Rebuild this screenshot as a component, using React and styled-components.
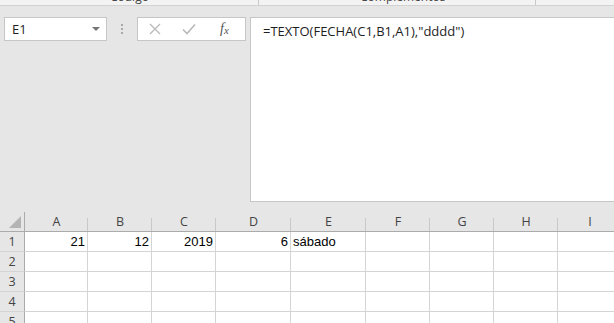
import styled, { createGlobalStyle } from "styled-components";

const GlobalStyle = createGlobalStyle`
  html, body {
    margin: 0;
    padding: 0;
    background: #e6e6e6;
    overflow: hidden;
  }
  body {
    width: 614px;
    height: 323px;
    font-family: "Liberation Sans", Arial, sans-serif;
  }
`;

const columns = [
  { name: "A", width: 63 },
  { name: "B", width: 64 },
  { name: "C", width: 64 },
  { name: "D", width: 75 },
  { name: "E", width: 75 },
  { name: "F", width: 64 },
  { name: "G", width: 64 },
  { name: "H", width: 64 },
  { name: "I", width: 64 },
];

const rows = [
  { n: 1, cells: { A: "21", B: "12", C: "2019", D: "6", E: "sábado" } },
  { n: 2, cells: {} },
  { n: 3, cells: {} },
  { n: 4, cells: {} },
  { n: 5, cells: {} },
];

const textCols = ["E"];

const App = () => {
  return (
    <>
      <GlobalStyle />
      <Page>
        <Ribbon>
          <RibbonGroup $width={258}>
            <GroupLabel $left={110}>Código</GroupLabel>
          </RibbonGroup>
          <RibbonGroup $width={276}>
            <GroupLabel $left={101}>Complementos</GroupLabel>
          </RibbonGroup>
          <RibbonGroup $width={80} $last />
        </Ribbon>

        <FormulaRow>
          <NameBox>
            <span>E1</span>
            <DropArrow />
          </NameBox>
          <Grip>
            <i />
            <i />
            <i />
          </Grip>
          <ActionBox>
            <ActionIcon>
              <svg width="12" height="12" viewBox="0 0 12 12">
                <path d="M1 1 L11 11 M11 1 L1 11" stroke="#b9b9b9" strokeWidth="1.3" fill="none" />
              </svg>
            </ActionIcon>
            <ActionIcon>
              <svg width="14" height="12" viewBox="0 0 14 12">
                <path d="M1 6.5 L5 10.5 L13 1.5" stroke="#b9b9b9" strokeWidth="1.6" fill="none" />
              </svg>
            </ActionIcon>
            <Fx>
              f<sub>x</sub>
            </Fx>
          </ActionBox>
          <FormulaInput>=TEXTO(FECHA(C1,B1,A1),"dddd")</FormulaInput>
        </FormulaRow>

        <Sheet $cols={columns.map((c) => c.width + "px").join(" ")}>
          <Corner>
            <svg width="12" height="12" viewBox="0 0 12 12">
              <polygon points="12,0 12,12 0,12" fill="#b4b4b4" />
            </svg>
          </Corner>
          {columns.map((c) => (
            <ColHeader key={c.name}>{c.name}</ColHeader>
          ))}
          {rows.map((r) => (
            <Row key={r.n} r={r} />
          ))}
        </Sheet>
      </Page>
    </>
  );
};

const Row = ({ r }) => {
  return (
    <>
      <RowHeader>{r.n}</RowHeader>
      {columns.map((c) => {
        const val = r.cells[c.name];
        return (
          <Cell key={c.name} $text={textCols.includes(c.name)}>
            {val}
          </Cell>
        );
      })}
    </>
  );
};

const Page = styled.div`
  width: 614px;
  height: 323px;
  overflow: hidden;
  display: flex;
  flex-direction: column;

  & > * {
    flex-shrink: 0;
  }
`;

const Ribbon = styled.div`
  height: 5px;
  background: #f3f3f3;
  border-bottom: 1px solid #d2d2d2;
  display: flex;
  overflow: hidden;
`;

const RibbonGroup = styled.div`
  position: relative;
  width: ${({ $width }) => $width}px;
  flex-shrink: 0;
  border-right: ${({ $last }) => ($last ? "none" : "1px solid #c8c8c8")};
`;

const GroupLabel = styled.span`
  position: absolute;
  left: ${({ $left }) => $left}px;
  top: -9px;
  font-family: "Open Sans", sans-serif;
  font-size: 12px;
  line-height: 12px;
  color: #444;
  white-space: nowrap;
`;

const FormulaRow = styled.div`
  display: flex;
  align-items: flex-start;
  margin-top: 11px;
  padding-left: 4px;
`;

const NameBox = styled.div`
  height: 22px;
  width: 88px;
  background: #fff;
  border: 1px solid #c6c6c6;
  display: flex;
  align-items: center;
  justify-content: space-between;
  padding: 0 6px 0 7px;
  box-sizing: content-box;
  font-family: "Open Sans", sans-serif;
  font-size: 13px;
  color: #1e1e1e;
`;

const DropArrow = styled.span`
  width: 0;
  height: 0;
  border-left: 4px solid transparent;
  border-right: 4px solid transparent;
  border-top: 4px solid #777;
  margin-top: -1px;
`;

const Grip = styled.div`
  width: 30px;
  height: 24px;
  display: flex;
  flex-direction: column;
  align-items: center;
  justify-content: center;
  gap: 2px;

  i {
    width: 2px;
    height: 2px;
    background: #a8a8a8;
  }
`;

const ActionBox = styled.div`
  height: 22px;
  width: 97px;
  background: #fff;
  border: 1px solid #c6c6c6;
  display: flex;
  align-items: center;
  padding-left: 10px;
  gap: 20px;
  box-sizing: content-box;
`;

const ActionIcon = styled.span`
  display: flex;
  width: 14px;
  justify-content: center;
`;

const Fx = styled.span`
  margin-left: 4px;
  font-family: "Liberation Serif", "Times New Roman", serif;
  font-style: italic;
  font-size: 14px;
  color: #555;

  sub {
    font-size: 11px;
    vertical-align: -1px;
  }
`;

const FormulaInput = styled.div`
  margin-left: 4px;
  flex: 1;
  height: 185px;
  background: #fff;
  border: 1px solid #c6c6c6;
  border-right: none;
  padding: 4px 0 0 12px;
  box-sizing: border-box;
  font-family: "Open Sans", sans-serif;
  font-size: 13px;
  color: #1e1e1e;
`;

const Sheet = styled.div`
  margin-top: 10px;
  display: grid;
  grid-template-columns: 25px ${({ $cols }) => $cols};
  grid-auto-rows: 20px;
`;

const Corner = styled.div`
  display: flex;
  align-items: flex-end;
  justify-content: flex-end;
  padding: 0 3px 3px 0;
  border-right: 1px solid #ababab;
  border-bottom: 1px solid #ababab;
  box-sizing: border-box;
`;

const ColHeader = styled.div`
  display: flex;
  align-items: center;
  justify-content: center;
  font-family: "Open Sans", sans-serif;
  font-size: 12.5px;
  color: #444;
  border-bottom: 1px solid #ababab;
  box-sizing: border-box;
  position: relative;

  &::after {
    content: "";
    position: absolute;
    right: 0;
    top: 6px;
    bottom: 0;
    border-right: 1px solid #c8c8c8;
  }
`;

const RowHeader = styled.div`
  display: flex;
  align-items: center;
  justify-content: center;
  font-family: "Open Sans", sans-serif;
  font-size: 12.5px;
  color: #444;
  border-right: 1px solid #ababab;
  border-bottom: 1px solid #d4d4d4;
  box-sizing: border-box;
`;

const Cell = styled.div`
  background: #fff;
  display: flex;
  align-items: center;
  justify-content: ${({ $text }) => ($text ? "flex-start" : "flex-end")};
  padding: 0 2px;
  font-size: 13px;
  color: #000;
  border-right: 1px solid #d4d4d4;
  border-bottom: 1px solid #d4d4d4;
  box-sizing: border-box;
  white-space: nowrap;
`;

export default App;
